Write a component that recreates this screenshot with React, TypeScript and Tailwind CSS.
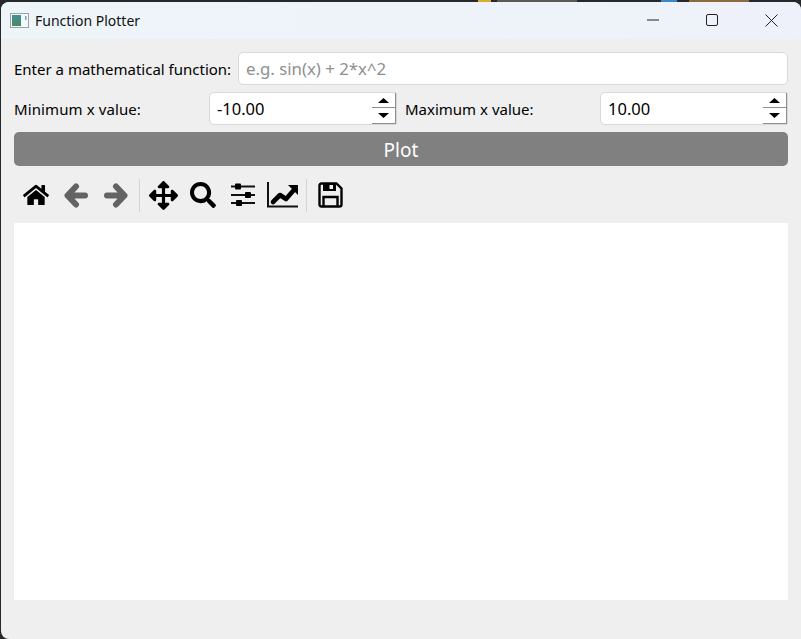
import { FaHome, FaArrowsAlt, FaSearch } from "react-icons/fa"

function AppIcon() {
  return (
    <svg width="19" height="15" viewBox="0 0 19 15" className="shrink-0">
      <rect x="0.5" y="0.5" width="18" height="14" fill="#f4f8fa" stroke="#9aa3a8" />
      <defs>
        <linearGradient id="pane" x1="0" y1="0" x2="0" y2="1">
          <stop offset="0" stopColor="#3f8f9a" />
          <stop offset="1" stopColor="#4d8a5c" />
        </linearGradient>
      </defs>
      <rect x="2" y="2" width="9" height="11" fill="url(#pane)" />
      <rect x="15" y="3" width="1.5" height="4" fill="#6fa9a6" />
    </svg>
  )
}

function Spin({ value }: { value: string }) {
  return (
    <div className="flex h-[33px] w-[188px] shrink-0 items-center justify-between rounded-l-[5px] rounded-r-[2px] border border-[#d8d8d8] bg-white pl-[7px] text-[16.5px]">
      <span className="pt-px">{value}</span>
      <div className="flex h-[31px] w-[24px] flex-col self-start border-r border-b border-[#8e8e8e]">
        <div className="flex h-[15px] items-center justify-center border-b border-[#8e8e8e]">
          <svg width="11" height="5" viewBox="0 0 11 5"><path d="M5.5 0 L11 5 L0 5 Z" fill="#000" /></svg>
        </div>
        <div className="flex flex-1 items-center justify-center">
          <svg width="11" height="5" viewBox="0 0 11 5"><path d="M0 0 L11 0 L5.5 5 Z" fill="#000" /></svg>
        </div>
      </div>
    </div>
  )
}

function ToolBtn({ children }: { children: React.ReactNode }) {
  return <div className="flex h-[40px] w-[40px] items-center justify-center">{children}</div>
}

function Sep() {
  return <div className="mx-[3px] h-[33px] w-px bg-[#d4d4d4]" />
}

function BackIcon() {
  return (
    <svg width="24" height="25" viewBox="0 0 24 25" fill="none" stroke="#636363" strokeWidth="6" strokeLinecap="round" strokeLinejoin="round">
      <path d="M21 12.5H4M12 3.5L3.5 12.5L12 21.5" />
    </svg>
  )
}

function ForwardIcon() {
  return (
    <svg width="24" height="25" viewBox="0 0 24 25" fill="none" stroke="#636363" strokeWidth="6" strokeLinecap="round" strokeLinejoin="round">
      <path d="M3 12.5H20M12 3.5L20.5 12.5L12 21.5" />
    </svg>
  )
}

function SlidersIcon() {
  return (
    <svg width="26" height="24" viewBox="0 0 26 24">
      <path d="M1 3.5H25M1 12H25M1 20H25" stroke="#111" strokeWidth="2" />
      <rect x="5" y="0.5" width="6" height="6" rx="1" fill="#000" />
      <rect x="15" y="9" width="6" height="6" rx="1" fill="#000" />
      <rect x="6" y="17" width="6" height="6" rx="1" fill="#000" />
    </svg>
  )
}

function ChartIcon() {
  return (
    <svg width="32" height="26" viewBox="0 0 32 26" fill="none">
      <path d="M1 0V24.5H31" stroke="#111" strokeWidth="2" />
      <path d="M6 20L13 13L19 17L26 9" stroke="#000" strokeWidth="4.6" strokeLinejoin="round" strokeLinecap="round" />
      <path d="M21 3H31V13Z" fill="#000" />
    </svg>
  )
}

function SaveIcon() {
  return (
    <svg width="25" height="26" viewBox="0 0 25 26">
      <path d="M3.5 1.5H18.5L23.5 6.5V22.5Q23.5 24.5 21.5 24.5H3.5Q1.5 24.5 1.5 22.5V3.5Q1.5 1.5 3.5 1.5Z" fill="none" stroke="#000" strokeWidth="2.4" />
      <path d="M5 2H18V9H5Z" fill="#000" />
      <rect x="11.5" y="3" width="3.5" height="4" fill="#efefef" />
      <path d="M5.5 24V15H19.5V24" fill="none" stroke="#000" strokeWidth="2.4" />
    </svg>
  )
}

export default function App() {
  return (
    <div className="h-[639px] w-[801px] overflow-hidden bg-[#26282b] pl-px font-['Noto_Sans',sans-serif] text-[15px] text-black">
      <div className="flex h-[2px]">
        <div className="ml-[477px] w-[13px] bg-[#d6ad2e]" />
        <div className="ml-[6px] w-[80px] bg-[#5a5a52]" />
        <div className="ml-[84px] w-[16px] bg-[#3c88cc]" />
        <div className="ml-[12px] w-[60px] bg-[#8a6a3e]" />
      </div>
      <div className="flex h-[637px] w-[800px] flex-col rounded-t-[8px] rounded-bl-[8px] bg-[#efefef]">
        <div className="flex h-[37px] shrink-0 items-center rounded-t-[8px] bg-gradient-to-r from-[#eef5f9] to-[#eef1f9] pl-[9px] pb-px">
          <AppIcon />
          <span className="ml-[6px] flex-1 text-[14px] text-[#111]">Function Plotter</span>
          <svg width="14" height="2" viewBox="0 0 14 2" className="mr-[46px]"><path d="M1 1H13" stroke="#222" strokeWidth="1" /></svg>
          <svg width="12" height="12" viewBox="0 0 12 12" className="mr-[47px]"><rect x="0.5" y="0.5" width="11" height="11" rx="1.5" fill="none" stroke="#222" /></svg>
          <svg width="13" height="13" viewBox="0 0 13 13" className="mr-[23px]"><path d="M0.5 0.5L12.5 12.5M12.5 0.5L0.5 12.5" stroke="#222" strokeWidth="1" /></svg>
        </div>

        <div className="flex flex-1 flex-col px-[13px]">
          <div className="mt-[13px] flex items-center">
            <span className="w-[224px] shrink-0 whitespace-nowrap pt-px">Enter a mathematical function:</span>
            <div className="flex h-[33px] flex-1 items-center rounded-[5px] border border-[#d8d8d8] bg-white pl-[7px] text-[16.8px] text-[#8f8f8f]">
              e.g. sin(x) + 2*x^2
            </div>
          </div>

          <div className="mt-[7px] flex items-center">
            <span className="w-[195px] shrink-0 pt-px tracking-[0.1px]">Minimum x value:</span>
            <Spin value="-10.00" />
            <span className="ml-[8px] flex-1 pt-px">Maximum x value:</span>
            <Spin value="10.00" />
          </div>

          <div className="mt-[7px] flex h-[34px] items-center justify-center rounded-[5px] bg-[#808080] pt-[2px] text-[19px] text-white">
            Plot
          </div>

          <div className="mt-[9px] flex h-[40px] items-center pl-[2px]">
            <ToolBtn><FaHome size={26} /></ToolBtn>
            <ToolBtn><BackIcon /></ToolBtn>
            <ToolBtn><ForwardIcon /></ToolBtn>
            <Sep />
            <ToolBtn><FaArrowsAlt size={29} /></ToolBtn>
            <ToolBtn><FaSearch size={26} /></ToolBtn>
            <ToolBtn><SlidersIcon /></ToolBtn>
            <ToolBtn><ChartIcon /></ToolBtn>
            <Sep />
            <ToolBtn><SaveIcon /></ToolBtn>
          </div>

          <div className="mt-[8px] h-[377px] bg-white" />
        </div>
      </div>
    </div>
  )
}
